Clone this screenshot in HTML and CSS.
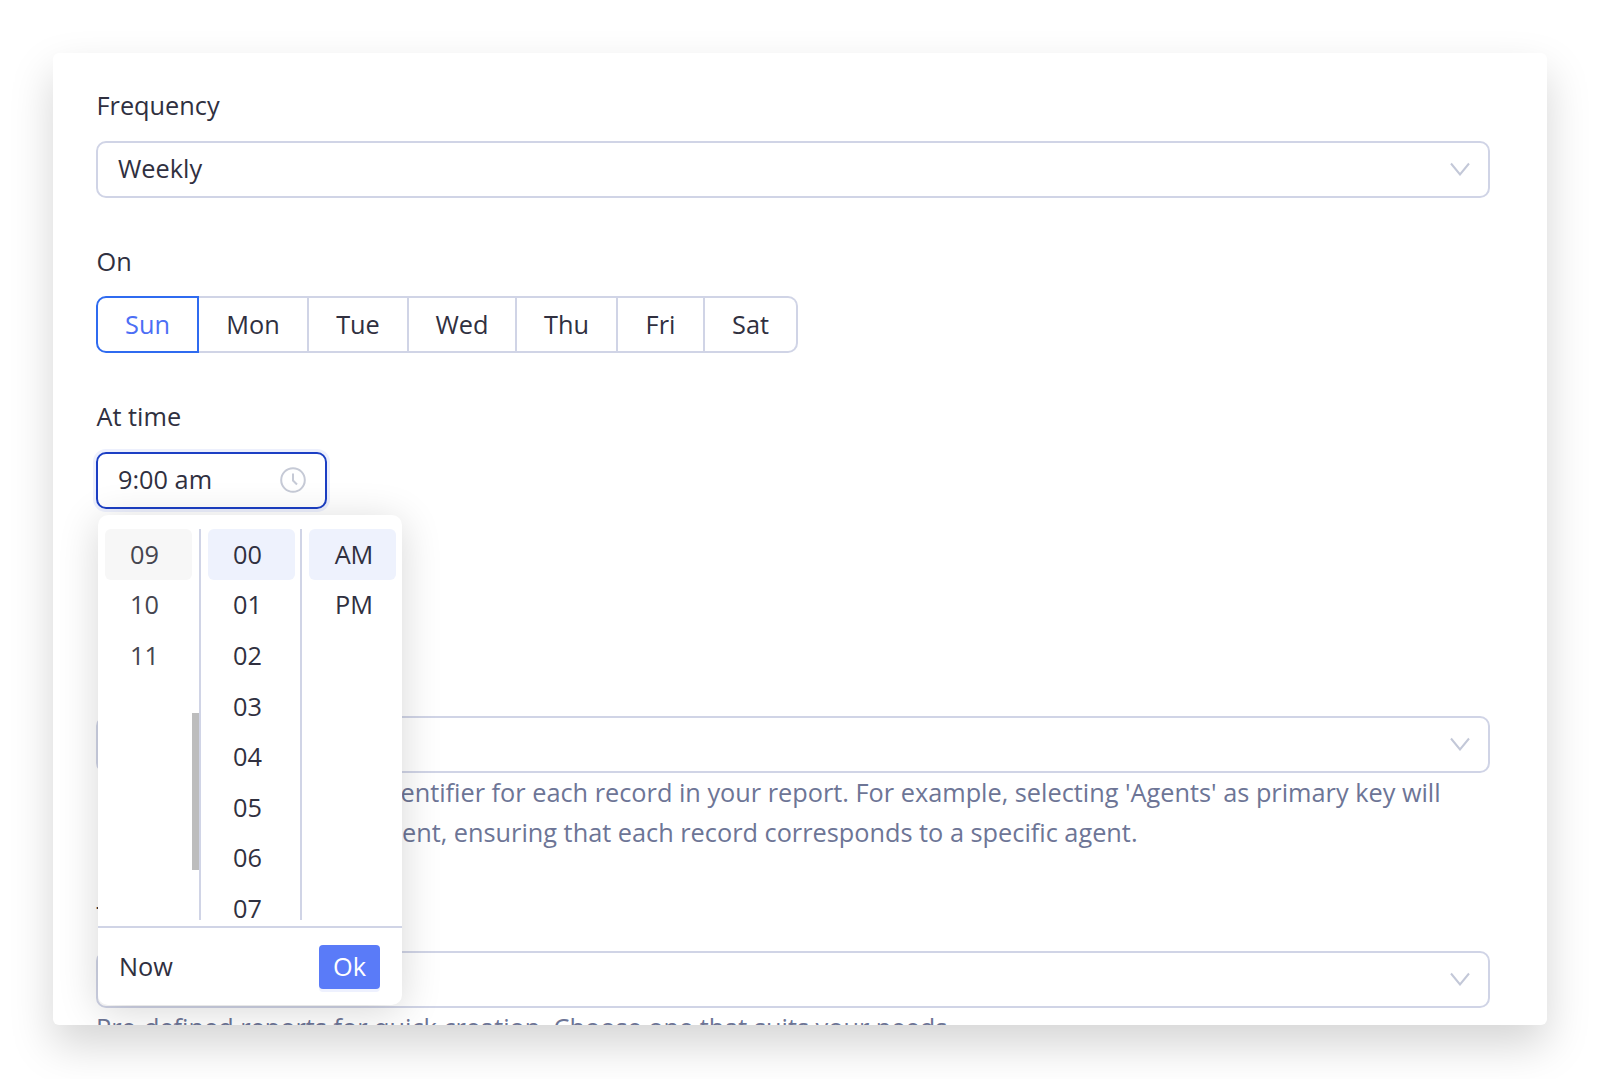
FILE: index.html
```html
<!DOCTYPE html>
<html lang="en">
<head>
<meta charset="utf-8">
<title>Report schedule</title>
<link rel="stylesheet" href="styles.css">
</head>
<body>
<main class="card">
  <section class="field">
    <label class="label">Frequency</label>
    <div class="select"><span class="value">Weekly</span><svg class="chev" viewBox="0 0 20 14"><path d="M1 1.5 10 12.5 19 1.5"/></svg></div>
  </section>
  <section class="field field-on">
    <label class="label">On</label>
    <div class="days">
      <button class="day day-sun active">Sun</button>
      <button class="day day-mon">Mon</button>
      <button class="day day-tue">Tue</button>
      <button class="day day-wed">Wed</button>
      <button class="day day-thu">Thu</button>
      <button class="day day-fri">Fri</button>
      <button class="day day-sat">Sat</button>
    </div>
  </section>
  <section class="field field-time">
    <label class="label">At time</label>
    <div class="time-input">
      <span class="value">9:00 am</span>
      <svg class="clock" viewBox="0 0 26 26"><circle cx="13" cy="13" r="11.8"/><path d="M13 6.5V13.5L17 17.5"/></svg>
    </div>
    <div class="picker">
      <div class="columns">
        <div class="col col-h">
          <div class="cell cell-grey">09</div><div class="cell">10</div><div class="cell">11</div>
          <div class="thumb"></div>
        </div>
        <div class="col col-m">
          <div class="cell cell-blue">00</div><div class="cell">01</div><div class="cell">02</div><div class="cell">03</div><div class="cell">04</div><div class="cell">05</div><div class="cell">06</div><div class="cell">07</div>
        </div>
        <div class="col col-p">
          <div class="cell cell-blue">AM</div><div class="cell">PM</div>
        </div>
      </div>
      <div class="foot"><span class="now">Now</span><button class="ok">Ok</button></div>
    </div>
  </section>
  <section class="field field-key">
    <label class="label">Primary key</label>
    <div class="select"><span></span><svg class="chev" viewBox="0 0 20 14"><path d="M1 1.5 10 12.5 19 1.5"/></svg></div>
    <p class="help help-key">Primary key is a unique identifier for each record in your report. For example, selecting 'Agents' as primary key will<br>prepare a row for each agent, ensuring that each record corresponds to a specific agent.</p>
  </section>
  <section class="field field-tpl">
    <label class="label">Template</label>
    <div class="select"><span></span><svg class="chev" viewBox="0 0 20 14"><path d="M1 1.5 10 12.5 19 1.5"/></svg></div>
    <p class="help">Pre-defined reports for quick creation. Choose one that suits your needs.</p>
  </section>
</main>
</body>
</html>
```
FILE: styles.css
```css
* { box-sizing: border-box; }
html, body { margin: 0; height: 100%; overflow: hidden; background: #fff; }
body { padding: 53px 53px 0; font-family: "Open Sans", "Noto Sans", sans-serif; color: #30303f; }
.card {
  height: 972px;
  padding: 36px 57px 0 43px;
  background: #fff;
  border-radius: 6px;
  overflow: hidden;
  position: relative;
  box-shadow: 0 20px 44px rgba(0, 0, 0, .17);
}
.field { position: relative; margin-bottom: 47px; }
.label { display: block; font-size: 25.3px; line-height: 32px; margin-bottom: 20px; padding-left: .5px; }
.field-on .label { margin-bottom: 19px; }
.select {
  height: 57px;
  border: 2px solid #d0d4e6;
  border-radius: 10px;
  display: flex;
  align-items: center;
  justify-content: space-between;
  padding: 0 18px 2px 20px;
  font-size: 25.3px;
}
.value { margin-bottom: 1px; }
.chev { width: 20px; height: 14px; fill: none; stroke: #c3c8d8; stroke-width: 2; }
.days { display: flex; height: 57px; }
.day {
  font: inherit;
  font-size: 25.3px;
  color: inherit;
  background: #fff;
  border: 2px solid #d0d4e6;
  border-left-width: 0;
  padding: 0 0 2px;
}
.day-sun { width: 103px; border-left-width: 2px; border-radius: 10px 0 0 10px; }
.day-mon { width: 110px; }
.day-tue { width: 100px; }
.day-wed { width: 108px; }
.day-thu { width: 101px; }
.day-fri { width: 87px; }
.day-sat { width: 93px; border-radius: 0 10px 10px 0; }
.day.active { color: #4c6ef5; border-color: #2f6bf0; }
.time-input {
  width: 231px;
  height: 57px;
  border: 2px solid #1c3fc4;
  border-radius: 10px;
  box-shadow: 0 0 0 3px #edf0fd;
  display: flex;
  align-items: center;
  justify-content: space-between;
  padding: 0 19px 2px 20px;
  font-size: 25.3px;
}
.clock { width: 26px; height: 26px; fill: none; stroke: #c6cad6; stroke-width: 2; }
.picker {
  position: absolute;
  left: 2px;
  top: 115px;
  width: 304px;
  height: 490px;
  background: #fff;
  border-radius: 10px;
  box-shadow: 0 6px 40px rgba(0, 0, 0, .16);
  z-index: 2;
  display: flex;
  flex-direction: column;
}
.columns { display: flex; height: 391px; margin-top: 14px; overflow: hidden; flex: none; padding-left: 7px; }
.col { position: relative; overflow: hidden; }
.col-h { width: 96px; border-right: 2px solid #d0d4e6; }
.col-m { width: 101px; border-right: 2px solid #d0d4e6; padding-left: 7px; }
.col-p { width: 96px; padding-left: 7px; }
.cell { width: 87px; height: 50.6px; flex: none; display: flex; align-items: center; justify-content: center; font-size: 25.3px; border-radius: 6px; padding: 0 8px 1px 0; }
.col-p .cell { padding: 0 0 1px 3px; }
.col-h .cell { color: #45454f; }
.cell-grey { background: #f7f7f7; }
.cell-blue { background: #eef2fd; }
.thumb { position: absolute; right: 0; top: 184px; width: 7px; height: 157px; background: #bdbdbd; }
.foot {
  margin-top: 6px;
  flex: 1;
  border-top: 2px solid #d0d4e6;
  display: flex;
  align-items: center;
  justify-content: space-between;
  padding: 0 22px 0 21px;
}
.now { font-size: 25.3px; margin-bottom: 2px; }
.ok {
  width: 61px;
  height: 44px;
  font: inherit;
  font-size: 25.3px;
  color: #fff;
  background: #5a7bf8;
  border: 0;
  border-radius: 4px;
  padding: 0 0 2px;
  box-shadow: 0 3px 0 #eef1fe;
}
.field-time { margin-bottom: 155px; }
.field-key { margin-bottom: 47px; }
.help { margin: -1px 0 0; font-size: 25.3px; line-height: 40px; color: #6d7596; white-space: nowrap; }
.help-key { padding-left: 2px; }
```
